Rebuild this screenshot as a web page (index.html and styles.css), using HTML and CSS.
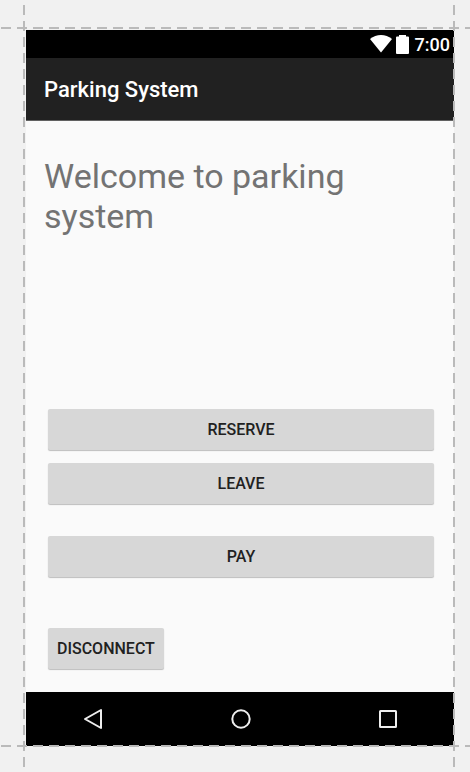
FILE: index.html
```html
<!DOCTYPE html>
<html lang="en">
<head>
<meta charset="utf-8">
<meta name="viewport" content="width=device-width, initial-scale=1">
<title>Parking System</title>
<link rel="stylesheet" href="styles.css">
</head>
<body>
<div class="canvas">
  <div class="device">
    <div class="status-bar">
      <svg class="wifi" width="22" height="18" viewBox="0 0 22 18" aria-hidden="true"><path d="M0 4Q5 0 11 0T22 4L11 17.500Z"/></svg>
      <svg class="battery" width="13" height="19" viewBox="0 0 13 19" aria-hidden="true"><path d="M3 1.500V0H10V1.500H12Q13 1.500 13 2.500V18Q13 19 12 19H1Q0 19 0 18V2.500Q0 1.500 1 1.500Z"/></svg>
      <span class="clock">7:00</span>
    </div>
    <header class="app-bar"><h1 class="app-title">Parking System</h1></header>
    <main class="content">
      <p class="welcome">Welcome to parking system</p>
      <div class="actions">
        <button class="button" type="button">RESERVE</button>
        <button class="button" type="button">LEAVE</button>
        <button class="button button-pay" type="button">PAY</button>
        <button class="button button-disconnect" type="button">DISCONNECT</button>
      </div>
    </main>
    <nav class="nav-bar" aria-label="System navigation">
      <button class="nav-button" type="button" aria-label="Back"><svg width="24" height="24" viewBox="0 0 24 24"><path d="M20 3V21L4 12Z"/></svg></button>
      <button class="nav-button" type="button" aria-label="Home"><svg width="24" height="24" viewBox="0 0 24 24"><circle cx="12" cy="12" r="8.700"/></svg></button>
      <button class="nav-button" type="button" aria-label="Recent apps"><svg width="24" height="24" viewBox="0 0 24 24"><rect x="4" y="4" width="16" height="16" rx="0.500"/></svg></button>
    </nav>
  </div>
  <div class="guide guide-column guide-left"></div>
  <div class="guide guide-column guide-right"></div>
  <div class="guide guide-row guide-top"></div>
  <div class="guide guide-row guide-bottom"></div>
</div>
</body>
</html>
```
FILE: styles.css
```css
* {
  box-sizing: border-box;
}

body {
  margin: 0;
  background: #f1f1f1;
  font-family: Roboto, sans-serif;
}

.canvas {
  position: relative;
  display: flex;
  min-height: 100vh;
  padding: 30px 16px 26px 26px;
}

.device {
  flex: 1;
  display: flex;
  flex-direction: column;
  background: #fafafa;
}

.status-bar {
  display: flex;
  justify-content: flex-end;
  align-items: center;
  height: 28px;
  padding-right: 4px;
  background: #000;
  color: #fff;
  fill: #fff;
}

.battery {
  margin: 0 6px 0 4px;
}

.clock {
  font-size: 18px;
  font-weight: 500;
  line-height: 28px;
  padding-top: 2px;
}

.app-bar {
  display: flex;
  align-items: center;
  height: 63px;
  padding: 0 18px;
  background: #212121;
  border-bottom: 1px solid #616161;
}

.app-title {
  margin: 0;
  color: #fff;
  font-size: 22px;
  font-weight: 500;
}

.content {
  flex: 1;
  display: flex;
  flex-direction: column;
  justify-content: space-between;
  padding: 35px 20px 23px 18px;
}

.welcome {
  max-width: 340px;
  margin: 0;
  color: #737373;
  font-size: 34px;
  line-height: 40px;
}

.actions {
  display: flex;
  flex-direction: column;
  gap: 13px;
  padding-left: 4px;
}

.button {
  height: 41px;
  padding: 0 9px;
  border: 0;
  border-radius: 2px;
  background: #d7d7d7;
  box-shadow: 0 1px 1px #bdbdbd;
  color: #212121;
  font: 500 16px Roboto, sans-serif;
}

.button-pay {
  margin-top: 19px;
}

.button-disconnect {
  align-self: flex-start;
  margin-top: 38px;
}

.nav-bar {
  display: flex;
  justify-content: space-between;
  align-items: center;
  height: 54px;
  padding: 0 54px 0 55px;
  background: #000;
}

.nav-button {
  display: flex;
  padding: 0;
  border: 0;
  background: none;
  fill: none;
  stroke: #eee;
  stroke-width: 2;
  stroke-linejoin: round;
}

.guide {
  position: absolute;
  pointer-events: none;
}

.guide-column {
  top: 5px;
  bottom: 5px;
  width: 2px;
  background: repeating-linear-gradient(to bottom, #bababa 0 10px, transparent 10px 16px);
}

.guide-left {
  left: 23px;
}

.guide-right {
  right: 15px;
}

.guide-row {
  left: 1px;
  right: 0;
  height: 2px;
  background: repeating-linear-gradient(to right, #bababa 0 10px, transparent 10px 16px);
}

.guide-top {
  top: 27px;
}

.guide-bottom {
  bottom: 25px;
}
```
